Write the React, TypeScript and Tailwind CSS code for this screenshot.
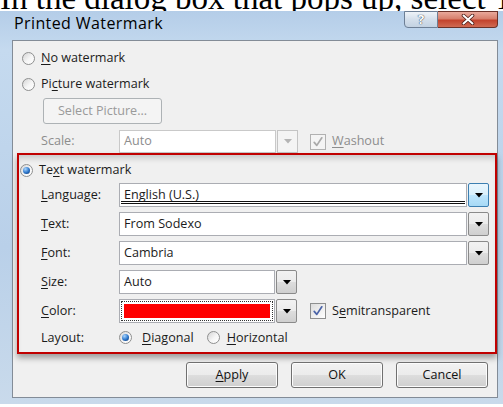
import type { ReactNode } from 'react'

// Win7-style "Printed Watermark" dialog, with the tail of a document sentence above it

function Key({ children }: { children: ReactNode }) {
  return <span className="underline decoration-1 underline-offset-[2px]">{children}</span>
}

function Radio({ checked = false }: { checked?: boolean }) {
  return (
    <span className="flex h-[13px] w-[13px] shrink-0 items-center justify-center rounded-full border border-[#8e8f8f] bg-[linear-gradient(135deg,#d4d4d4,#f6f6f6_55%,#ffffff)]">
      {checked && (
        <span className="h-[7px] w-[7px] rounded-full bg-[radial-gradient(circle_at_35%_30%,#a9d6ff,#2a74c9_55%,#0b2c5e)]" />
      )}
    </span>
  )
}

function Check({ disabled = false }: { disabled?: boolean }) {
  return (
    <span
      className={
        disabled
          ? 'flex h-[16px] w-[16px] shrink-0 items-center justify-center border border-[#b1b1b1] bg-[#f4f4f4]'
          : 'flex h-[16px] w-[16px] shrink-0 items-center justify-center border border-[#8e8f8f] bg-[linear-gradient(135deg,#dcdcdc,#ffffff)]'
      }
    >
      <svg width="12" height="12" viewBox="0 0 12 12">
        <path
          d="M2.2 6.4 L4.8 9.4 L9.8 1.8"
          fill="none"
          stroke={disabled ? '#a9a9a9' : '#4a63a8'}
          strokeWidth="1.7"
          strokeLinecap="round"
          strokeLinejoin="round"
        />
      </svg>
    </span>
  )
}

function Arrow({ color = '#000' }: { color?: string }) {
  return (
    <svg width="8" height="5" viewBox="0 0 8 5">
      <path d="M0 0 H8 L4 4.5 Z" fill={color} />
    </svg>
  )
}

function DropButton({ hot = false, disabled = false }: { hot?: boolean; disabled?: boolean }) {
  if (disabled) {
    return (
      <span className="ml-[1px] flex w-[21px] items-center justify-center border border-[#c4c4c4] bg-[#f4f4f4]">
        <Arrow color="#b4b4b4" />
      </span>
    )
  }
  if (hot) {
    return (
      <span className="ml-[1px] flex w-[21px] items-center justify-center rounded-[2px] border border-[#3c7fb1] bg-[linear-gradient(180deg,#eaf6fd,#d9f0fc_50%,#bee6fd_51%,#a7d9f5)]">
        <Arrow />
      </span>
    )
  }
  return (
    <span className="ml-[1px] flex w-[21px] items-center justify-center rounded-[2px] border border-[#8a8a8a] bg-[linear-gradient(180deg,#f2f2f2,#ebebeb_50%,#dddddd_51%,#cfcfcf)]">
      <Arrow />
    </span>
  )
}

function Field({ children, className }: { children?: ReactNode; className: string }) {
  return <span className={`flex flex-1 items-center border border-[#abadb3] bg-white ${className}`}>{children}</span>
}

function Button({ children }: { children: ReactNode }) {
  return (
    <button className="flex h-[26px] w-[92px] items-center justify-center rounded-[3px] border border-[#707070] bg-[linear-gradient(180deg,#f2f2f2,#ebebeb_50%,#dddddd_51%,#cfcfcf)] text-[#111] shadow-[inset_0_0_0_1px_#fcfcfc]">
      {children}
    </button>
  )
}

function Label({ children }: { children: ReactNode }) {
  return <span className="ml-[22px] w-[78px] shrink-0">{children}</span>
}

export default function App() {
  return (
    <div className="h-[407px] w-[503px] overflow-hidden bg-white">
      <div className="h-[11px] overflow-hidden">
        <p className="-mt-[7px] whitespace-nowrap font-['Liberation_Serif',serif] text-[33px] leading-[11px] text-black">
          In the dialog box that pops up, select Text watermark
        </p>
      </div>

      <div className="h-[393px] bg-[linear-gradient(180deg,#b4cde8_0%,#c5daef_10%,#b9d0e9_60%,#c9daeb_100%)] pl-[12px] pr-[5px] font-['Open_Sans',sans-serif] text-[12.6px] text-[#1b1b1b]">
        <div className="-ml-[12px] flex h-[29px] items-start justify-between">
          <span className="pl-[14px] pt-[4px] text-[16px] leading-[16px] tracking-[0.4px] text-black">Printed Watermark</span>
          <div className="flex">
            <span className="flex h-[17px] w-[34px] items-center justify-center rounded-bl-[4px] border border-[#6d7f95] bg-[linear-gradient(180deg,#eef3f8,#d4dfeb_50%,#c3d2e2)] text-[13px] leading-none font-bold text-white [text-shadow:0_0_1px_#2e3d52,0_0_1px_#2e3d52]">
              ?
            </span>
            <span className="flex h-[17px] w-[60px] items-center justify-center rounded-br-[4px] border border-l-0 border-[#6b3128] bg-[linear-gradient(180deg,#e9a99b,#d7806d_45%,#c3432d_55%,#d06a52)]">
              <svg width="14" height="11" viewBox="0 0 14 11">
                <path d="M2.5 1.5 L11.5 9.5 M11.5 1.5 L2.5 9.5" stroke="#4a1c16" strokeWidth="3.6" strokeLinecap="round" />
                <path d="M2.5 1.5 L11.5 9.5 M11.5 1.5 L2.5 9.5" stroke="#ffffff" strokeWidth="2" strokeLinecap="round" />
              </svg>
            </span>
          </div>
        </div>

        <div className="flex h-[358px] flex-col border border-[#838c97] bg-[#f0f0f0] pl-[9px] pt-[7px]">
          <div className="flex h-[20px] items-center gap-[6px]">
            <Radio />
            <span>
              <Key>N</Key>o watermark
            </span>
          </div>
          <div className="mt-[6px] flex h-[20px] items-center gap-[6px]">
            <Radio />
            <span>
              Pi<Key>c</Key>ture watermark
            </span>
          </div>
          <div className="mt-[4px] ml-[21px] flex h-[26px] w-[119px] items-center justify-center rounded-[3px] border border-[#adb2b5] bg-[#f4f4f4] text-[#9a9a9a]">
            Select Picture...
          </div>
          <div className="mt-[6px] flex h-[23px] items-stretch text-[#8d8d8d]">
            <span className="ml-[19px] flex w-[78px] shrink-0 items-center">Scale:</span>
            <span className="flex w-[179px]">
              <Field className="border-[#c9c9c9] pl-[4px]">Auto</Field>
              <DropButton disabled />
            </span>
            <span className="ml-[12px] flex items-center gap-[6px]">
              <Check disabled />
              <span>
                <Key>W</Key>ashout
              </span>
            </span>
          </div>

          <div className="-ml-[5px] flex h-[201px] w-[480px] flex-col border-2 border-[#c00000] pt-[5px] shadow-[0_4px_6px_rgba(0,0,0,0.35),inset_0_6px_6px_-3px_rgba(0,0,0,0.18)]">
            <div className="ml-[1px] flex h-[20px] items-center gap-[6px]">
              <Radio checked />
              <span>
                Te<Key>x</Key>t watermark
              </span>
            </div>

            <div className="mt-[3px] flex h-[24px] items-stretch">
              <Label>
                <span className="flex h-full items-center">
                  <span>
                    <Key>L</Key>anguage:
                  </span>
                </span>
              </Label>
              <span className="flex w-[370px]">
                <Field className="relative pl-[4px]">
                  <span className="underline decoration-1 underline-offset-[2px]">English (U.S.)</span>
                  <span className="absolute right-[1px] bottom-[2px] left-[1px] h-[3px] border-y border-[#111]" />
                </Field>
                <DropButton hot />
              </span>
            </div>

            <div className="mt-[5px] flex h-[24px] items-stretch">
              <Label>
                <span className="flex h-full items-center">
                  <span>
                    <Key>T</Key>ext:
                  </span>
                </span>
              </Label>
              <span className="flex w-[370px]">
                <Field className="pl-[4px]">From Sodexo</Field>
                <DropButton />
              </span>
            </div>

            <div className="mt-[5px] flex h-[24px] items-stretch">
              <Label>
                <span className="flex h-full items-center">
                  <span>
                    <Key>F</Key>ont:
                  </span>
                </span>
              </Label>
              <span className="flex w-[370px]">
                <Field className="pl-[4px]">Cambria</Field>
                <DropButton />
              </span>
            </div>

            <div className="mt-[5px] flex h-[24px] items-stretch">
              <Label>
                <span className="flex h-full items-center">
                  <span>
                    <Key>S</Key>ize:
                  </span>
                </span>
              </Label>
              <span className="flex w-[178px]">
                <Field className="pl-[4px]">Auto</Field>
                <DropButton />
              </span>
            </div>

            <div className="mt-[5px] flex h-[24px] items-stretch">
              <Label>
                <span className="flex h-full items-center">
                  <span>
                    <Key>C</Key>olor:
                  </span>
                </span>
              </Label>
              <span className="flex w-[178px]">
                <Field className="p-[1px]">
                  <span className="flex h-full w-full items-center border border-dotted border-[#333] p-[2px]">
                    <span className="h-full w-full bg-[#ff0000]" />
                  </span>
                </Field>
                <DropButton />
              </span>
              <span className="ml-[13px] flex items-center gap-[6px]">
                <Check />
                <span>
                  S<Key>e</Key>mitransparent
                </span>
              </span>
            </div>

            <div className="mt-[5px] flex h-[20px] items-center">
              <Label>Layout:</Label>
              <span className="flex items-center gap-[10px]">
                <Radio checked />
                <span>
                  <Key>D</Key>iagonal
                </span>
              </span>
              <span className="ml-[13px] flex items-center gap-[7px]">
                <Radio />
                <span>
                  <Key>H</Key>orizontal
                </span>
              </span>
            </div>
          </div>

          <div className="mt-[8px] flex justify-end gap-[13px] pr-[9px]">
            <Button>
              <Key>A</Key>pply
            </Button>
            <Button>OK</Button>
            <Button>Cancel</Button>
          </div>
        </div>
      </div>
    </div>
  )
}
